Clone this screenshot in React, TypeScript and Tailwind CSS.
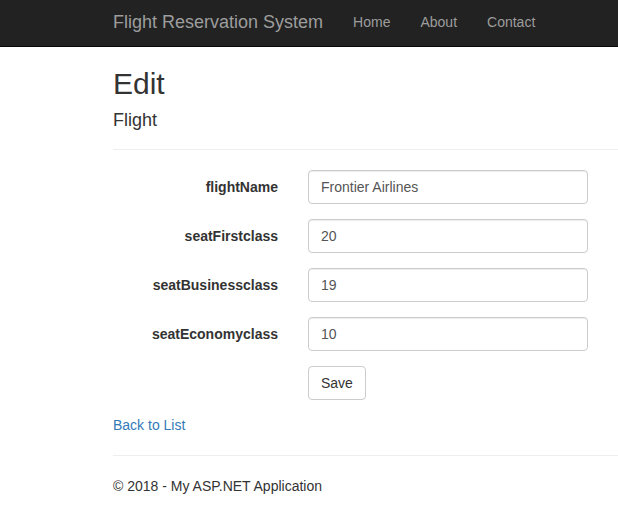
import React from "react";

const fields = [
  { label: "flightName", value: "Frontier Airlines" },
  { label: "seatFirstclass", value: "20" },
  { label: "seatBusinessclass", value: "19" },
  { label: "seatEconomyclass", value: "10" },
];

function Navbar() {
  return (
    <nav className="h-[47px] bg-[#222222] border-b border-[#080808] overflow-hidden">
      <div className="flex pl-[98px] pt-[12px]">
        <a className="px-[15px] text-[18px] leading-[20px] text-[#9d9d9d]" href="#">
          Flight Reservation System
        </a>
        <ul className="flex">
          {["Home", "About", "Contact"].map((item) => (
            <li key={item}>
              <a className="block px-[15px] text-[14px] leading-[20px] text-[#9d9d9d]" href="#">
                {item}
              </a>
            </li>
          ))}
        </ul>
      </div>
    </nav>
  );
}

export default function App() {
  return (
    <div
      className="min-h-[519px] w-[618px] overflow-hidden bg-white text-[14px] leading-[20px] text-[#333333]"
      style={{ fontFamily: '"Liberation Sans", Arial, Helvetica, sans-serif' }}
    >
      <Navbar />
      <div className="pl-[113px]">
        <h2 className="mt-[20px] mb-0 text-[30px] leading-[33px] font-normal">Edit</h2>
        <h4 className="mt-[10px] mb-[10px] text-[18px] leading-[20px] font-normal">Flight</h4>
        <hr className="mt-[19px] mb-[20px] border-t border-[#eeeeee]" />

        <form className="flex flex-col">
          {fields.map((f) => (
            <div key={f.label} className="flex mb-[15px]">
              <label className="w-[165px] pt-[7px] text-right font-bold text-[14px] leading-[20px] text-[#333333]">
                {f.label}
              </label>
              <div className="pl-[30px]">
                <input
                  className="block w-[280px] h-[34px] px-[12px] py-[6px] text-[14px] text-[#555555] bg-white border border-[#cccccc] rounded-[4px] shadow-[inset_0_1px_1px_rgba(0,0,0,0.075)] outline-none"
                  defaultValue={f.value}
                  style={{ fontFamily: '"Liberation Sans", Arial, sans-serif' }}
                />
              </div>
            </div>
          ))}
          <div className="flex mb-[15px]">
            <div className="w-[165px]" />
            <div className="pl-[30px]">
              <button
                type="button"
                className="h-[34px] px-[12px] py-[6px] text-[14px] leading-[20px] text-[#333333] bg-white border border-[#cccccc] rounded-[4px]"
              >
                Save
              </button>
            </div>
          </div>
        </form>

        <div>
          <a className="text-[#337ab7]" href="#">
            Back to List
          </a>
        </div>

        <hr className="mt-[20px] mb-[20px] border-t border-[#eeeeee]" />
        <footer>
          <p className="m-0">© 2018 - My ASP.NET Application</p>
        </footer>
      </div>
    </div>
  );
}
